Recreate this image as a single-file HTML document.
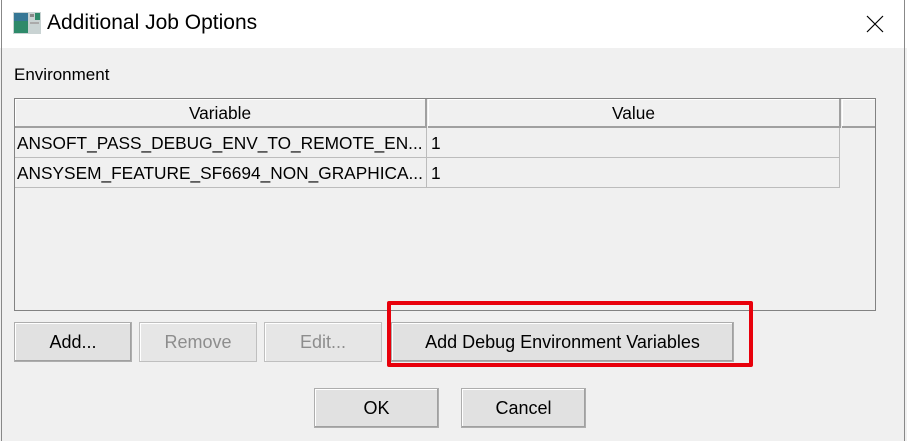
<!DOCTYPE html>
<html><head><style>
body{margin:0;width:907px;height:441px;background:#f0f0f0;font-family:"Liberation Sans",sans-serif;position:relative;overflow:hidden}
.a{position:absolute}
.btn{position:absolute;box-sizing:border-box;background:#e1e1e1;border:1px solid #adadad;box-shadow:inset -1px -1px 0 #a0a0a0,inset 1px 1px 0 #fff;font-size:18px;text-align:center;color:#000}
.dis{color:#8d8d8d;background:#e6e6e6;border-color:#bfbfbf;box-shadow:inset 1px 1px 0 #fff}
.cell{position:absolute;font-size:17.3px;white-space:nowrap;overflow:hidden;box-sizing:border-box}
</style></head><body>
<div class="a" style="left:0;top:0;width:907px;height:48px;background:#fff"></div>
<div class="a" style="left:1px;top:0;width:1px;height:441px;background:#888"></div>
<div class="a" style="left:904px;top:0;width:1px;height:441px;background:#888"></div>
<svg class="a" style="left:13px;top:12px" width="28" height="22"><rect x="0" y="0" width="28" height="22" fill="#c9d3d3"/><rect x="1" y="1" width="14" height="20" fill="#2e8a6a"/><rect x="1" y="1" width="14" height="8" fill="#3a6fa8" opacity=".7"/><rect x="17" y="2" width="4" height="3" fill="#888"/><rect x="22" y="1" width="5" height="7" fill="#2e8a6a"/><rect x="17" y="10" width="9" height="2" fill="#aaa"/></svg>
<div class="a" style="left:47px;top:11px;font-size:21px">Additional Job Options</div>
<svg class="a" style="left:866px;top:15px" width="18" height="18"><path d="M1 1L17 17M17 1L1 17" stroke="#000" stroke-width="1.2"/></svg>
<div class="a" style="left:14px;top:65px;font-size:17px">Environment</div>
<div class="a" style="left:14px;top:98px;width:860px;height:211px;border:1px solid #828282;background:#f0f0f0"></div>
<div class="cell" style="left:15px;top:99px;width:412px;height:29px;border-right:2px solid #a0a0a0;border-bottom:2px solid #a0a0a0;text-align:center;line-height:28px;box-shadow:inset 1px 1px 0 #fff">Variable</div>
<div class="cell" style="left:428px;top:99px;width:413px;height:29px;border-right:2px solid #a0a0a0;border-bottom:2px solid #a0a0a0;text-align:center;line-height:28px;box-shadow:inset 1px 1px 0 #fff">Value</div>
<div class="cell" style="left:842px;top:99px;width:33px;height:29px;border-bottom:2px solid #a0a0a0;box-shadow:inset 1px 1px 0 #fff"></div>
<div class="cell" style="left:15px;top:128px;width:412px;height:30px;border-right:1px solid #bcbcbc;border-bottom:1px solid #bcbcbc;padding-left:2px;line-height:30px">ANSOFT_PASS_DEBUG_ENV_TO_REMOTE_EN...</div>
<div class="cell" style="left:427px;top:128px;width:413px;height:30px;border-right:1px solid #bcbcbc;border-bottom:1px solid #bcbcbc;padding-left:4px;line-height:30px">1</div>
<div class="cell" style="left:15px;top:158px;width:412px;height:30px;border-right:1px solid #bcbcbc;border-bottom:1px solid #bcbcbc;padding-left:2px;line-height:30px">ANSYSEM_FEATURE_SF6694_NON_GRAPHICA...</div>
<div class="cell" style="left:427px;top:158px;width:413px;height:30px;border-right:1px solid #bcbcbc;border-bottom:1px solid #bcbcbc;padding-left:4px;line-height:30px">1</div>
<div class="btn" style="left:14px;top:322px;width:118px;height:40px;line-height:38px">Add...</div>
<div class="btn dis" style="left:139px;top:322px;width:118px;height:40px;line-height:38px">Remove</div>
<div class="btn dis" style="left:264px;top:322px;width:118px;height:40px;line-height:38px">Edit...</div>
<div class="btn" style="left:391px;top:322px;width:343px;height:40px;line-height:38px">Add Debug Environment Variables</div>
<div class="a" style="left:387px;top:301px;width:358px;height:58px;border:4px solid #e8000b;border-radius:2px"></div>
<div class="btn" style="left:314px;top:388px;width:125px;height:40px;line-height:38px">OK</div>
<div class="btn" style="left:461px;top:388px;width:125px;height:40px;line-height:38px">Cancel</div>
</body></html>
